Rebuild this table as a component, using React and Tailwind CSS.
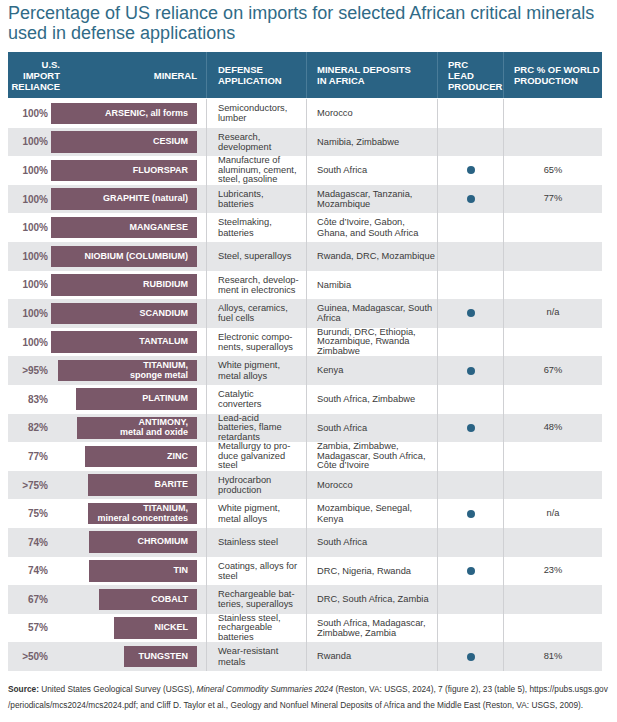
import React from "react";

const rows = [
  { pct: "100%", v: 100, name: ["ARSENIC, all forms"], use: ["Semiconductors,", "lumber"], dep: ["Morocco"] },
  { pct: "100%", v: 100, name: ["CESIUM"], use: ["Research,", "development"], dep: ["Namibia, Zimbabwe"] },
  { pct: "100%", v: 100, name: ["FLUORSPAR"], use: ["Manufacture of", "aluminum, cement,", "steel, gasoline"], dep: ["South Africa"], lead: true, world: "65%" },
  { pct: "100%", v: 100, name: ["GRAPHITE (natural)"], use: ["Lubricants,", "batteries"], dep: ["Madagascar, Tanzania,", "Mozambique"], lead: true, world: "77%" },
  { pct: "100%", v: 100, name: ["MANGANESE"], use: ["Steelmaking,", "batteries"], dep: ["Côte d’Ivoire, Gabon,", "Ghana, and South Africa"] },
  { pct: "100%", v: 100, name: ["NIOBIUM (COLUMBIUM)"], use: ["Steel, superalloys"], dep: ["Rwanda, DRC, Mozambique"] },
  { pct: "100%", v: 100, name: ["RUBIDIUM"], use: ["Research, develop-", "ment in electronics"], dep: ["Namibia"] },
  { pct: "100%", v: 100, name: ["SCANDIUM"], use: ["Alloys, ceramics,", "fuel cells"], dep: ["Guinea, Madagascar, South", "Africa"], lead: true, world: "n/a" },
  { pct: "100%", v: 100, name: ["TANTALUM"], use: ["Electronic compo-", "nents, superalloys"], dep: ["Burundi, DRC, Ethiopia,", "Mozambique, Rwanda", "Zimbabwe"] },
  { pct: ">95%", v: 95, name: ["TITANIUM,", "sponge metal"], use: ["White pigment,", "metal alloys"], dep: ["Kenya"], lead: true, world: "67%" },
  { pct: "83%", v: 83, name: ["PLATINUM"], use: ["Catalytic", "converters"], dep: ["South Africa, Zimbabwe"] },
  { pct: "82%", v: 82, name: ["ANTIMONY,", "metal and oxide"], use: ["Lead-acid", "batteries, flame", "retardants"], dep: ["South Africa"], lead: true, world: "48%" },
  { pct: "77%", v: 77, name: ["ZINC"], use: ["Metallurgy to pro-", "duce galvanized", "steel"], dep: ["Zambia, Zimbabwe,", "Madagascar, South Africa,", "Côte d’Ivoire"] },
  { pct: ">75%", v: 75, name: ["BARITE"], use: ["Hydrocarbon", "production"], dep: ["Morocco"] },
  { pct: "75%", v: 75, name: ["TITANIUM,", "mineral concentrates"], use: ["White pigment,", "metal alloys"], dep: ["Mozambique, Senegal,", "Kenya"], lead: true, world: "n/a" },
  { pct: "74%", v: 74, name: ["CHROMIUM"], use: ["Stainless steel"], dep: ["South Africa"] },
  { pct: "74%", v: 74, name: ["TIN"], use: ["Coatings, alloys for", "steel"], dep: ["DRC, Nigeria, Rwanda"], lead: true, world: "23%" },
  { pct: "67%", v: 67, name: ["COBALT"], use: ["Rechargeable bat-", "teries, superalloys"], dep: ["DRC, South Africa, Zambia"] },
  { pct: "57%", v: 57, name: ["NICKEL"], use: ["Stainless steel,", "rechargeable", "batteries"], dep: ["South Africa, Madagascar,", "Zimbabwe, Zambia"] },
  { pct: ">50%", v: 50, name: ["TUNGSTEN"], use: ["Wear-resistant", "metals"], dep: ["Rwanda"], lead: true, world: "81%" },
];

function Lines({ lines }) {
  return lines.map((l, i) => <div key={i}>{l}</div>);
}

function TextCell({ lines, pad }) {
  // three-line cells get tighter leading so they stay inside the row
  const lead = lines.length > 2 ? "leading-[9.4px]" : "leading-[10.3px]";
  return (
    <div
      className={`flex flex-col justify-center ${pad} border-l border-[#cfd0d3] text-[9.3px] ${lead} text-[#3a3a3a]`}
    >
      <Lines lines={lines} />
    </div>
  );
}

function Row({ r, shaded }) {
  return (
    <div
      className={`grid grid-cols-[40px_158px_100px_131px_66px_99px] h-[28.6px] ${
        shaded ? "bg-[#e5e6e8]" : "bg-white"
      }`}
    >
      <div className="flex items-center justify-end text-[10px] font-bold text-[#73606b]">
        {r.pct}
      </div>
      <div className="flex items-center justify-end pr-[9px]">
        <div
          className="h-[21.5px] bg-[#7a5869] flex flex-col justify-center items-end pr-[9px] text-white font-bold text-[9px] leading-[9.5px] text-right"
          style={{ width: `${r.v * 1.46}px` }}
        >
          <Lines lines={r.name} />
        </div>
      </div>
      <TextCell lines={r.use} pad="pl-[11px]" />
      <TextCell lines={r.dep} pad="pl-[10px]" />
      <div className="flex items-center justify-center border-l border-[#cfd0d3]">
        {r.lead && <div className="w-[8px] h-[8px] rounded-full bg-[#2a6384]" />}
      </div>
      <div className="flex items-center justify-center border-l border-[#cfd0d3] text-[9.3px] text-[#3a3a3a]">
        {r.world}
      </div>
    </div>
  );
}

export default function App() {
  return (
    <div className="w-[617px] bg-white font-['Liberation_Sans',Arial,sans-serif]">
      <h1 className="px-[8px] pt-[3px] text-[18px] leading-[20px] font-normal text-[#306b87]">
        Percentage of US reliance on imports for selected African critical minerals
        <br />
        used in defense applications
      </h1>

      <div className="mx-[8px] mt-[9px] w-[594px]">
        <div className="grid grid-cols-[52px_146px_100px_131px_66px_99px] h-[46px] bg-[#2a6384] text-white font-bold text-[9.5px] leading-[11px] uppercase">
          <div className="flex items-center justify-end text-right">
            <div>
              U.S.
              <br />
              IMPORT
              <br />
              RELIANCE
            </div>
          </div>
          <div className="flex items-center justify-end pr-[9px]">MINERAL</div>
          <div className="flex items-center pl-[11px] border-l border-[#4a7c99]">
            <div>
              DEFENSE
              <br />
              APPLICATION
            </div>
          </div>
          <div className="flex items-center pl-[10px] border-l border-[#4a7c99]">
            <div>
              MINERAL DEPOSITS
              <br />
              IN AFRICA
            </div>
          </div>
          <div className="flex items-center pl-[10px] border-l border-[#4a7c99]">
            <div>
              PRC
              <br />
              LEAD
              <br />
              PRODUCER
            </div>
          </div>
          <div className="flex items-center pl-[10px] border-l border-[#4a7c99]">
            <div>
              PRC % OF WORLD
              <br />
              PRODUCTION
            </div>
          </div>
        </div>

        <div className="border-t border-white">
          {rows.map((r, i) => (
            <Row key={i} r={r} shaded={i % 2 === 1} />
          ))}
        </div>
      </div>

      <p className="px-[8px] pt-[10px] text-[8.3px] leading-[16px] text-[#333]">
        <span className="font-bold">Source:</span> United States Geological Survey (USGS),{" "}
        <i>Mineral Commodity Summaries 2024</i> (Reston, VA: USGS, 2024), 7 (figure 2), 23 (table 5),
        https://pubs.usgs.gov
        <br />
        /periodicals/mcs2024/mcs2024.pdf; and Cliff D. Taylor et al., Geology and Nonfuel Mineral
        Deposits of Africa and the Middle East (Reston, VA: USGS, 2009).
      </p>
    </div>
  );
}
